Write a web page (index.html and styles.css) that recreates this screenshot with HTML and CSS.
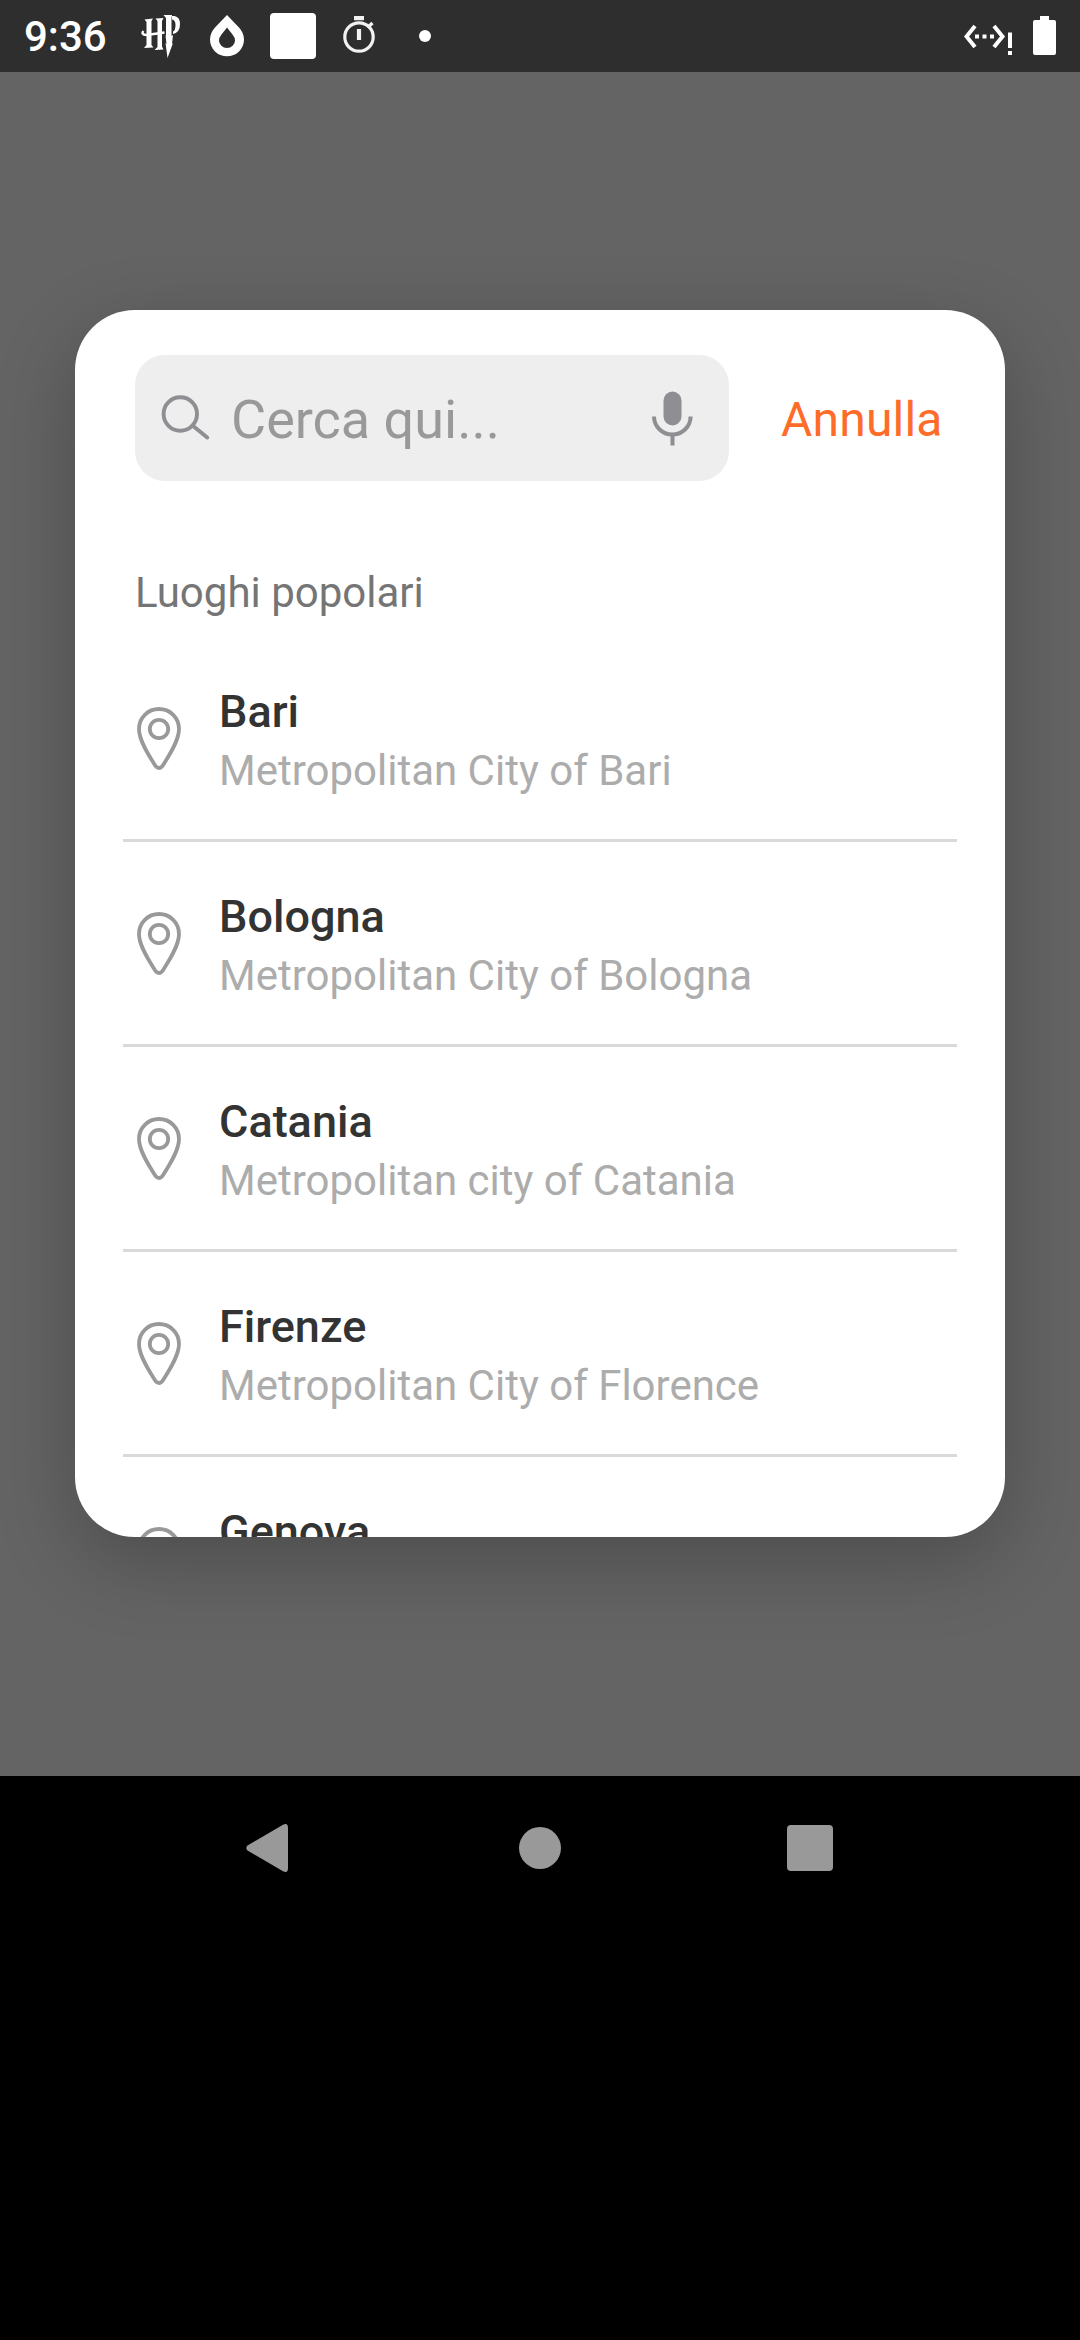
FILE: index.html
```html
<!DOCTYPE html>
<html lang="it">
<head>
<meta charset="utf-8">
<title>Luoghi popolari</title>
<link rel="stylesheet" href="styles.css">
</head>
<body>
<svg width="0" height="0" class="defs">
  <symbol id="pin" viewBox="0 0 44 63">
    <path d="M22 2C10.800 2 2 10.800 2 22c0 12 10.500 27.500 16.400 36.800 1.800 2.900 5.400 2.900 7.200 0C31.500 49.500 42 34 42 22 42 10.800 33.200 2 22 2z" fill="none" stroke="#999" stroke-width="3.800"/>
    <circle cx="22" cy="22" r="9.200" fill="none" stroke="#999" stroke-width="3.800"/>
  </symbol>
</svg>
<header class="status">
  <div class="clock">9:36</div>
  <svg class="logo" width="40" height="46" viewBox="141 13 40 46" fill="#fff">
    <path d="M144.500 19.500l8.500-1-1.500 2.500v24l2 2.500-9.500.5 2.500-3V22zM155.500 18.500l8-.5-1.500 3V46.500l1.500 3-9 .5 3-3V21z"/>
    <path d="M163.500 15h8.500l-.5 3v18l1.500-1-1 9 1-1-5.500 15-2-15 1 1-1-9 .5 1V18z"/>
    <path d="M172 16h2.500q5.500 1 5.500 8 0 8.500-7 10v-2.500q2.500-1 2.500-6.500 0-5-3.500-5.500z"/>
    <path d="M143.500 31q-3 3.500 3 4l18-2.500" fill="none" stroke="#fff" stroke-width="2.300"/>
  </svg>
  <svg class="drop" width="34" height="42" viewBox="0 0 34 42"><path fill="#fff" fill-rule="evenodd" d="M17 0L29 12.500Q34 18 34 24.500A17 16.800 0 0 1 0 24.500Q0 18 5 12.500zM17 12.500L11.500 19.500Q9 22.500 9 25.500A8 7.500 0 0 0 25 25.500Q25 22.500 22.500 19.500z"/></svg>
  <div class="tile"></div>
  <svg class="timer" width="32" height="38" viewBox="0 0 32 38" fill="none" stroke="#f2f2f2"><circle cx="16" cy="21" r="14.200" stroke-width="3.200"/><path d="M11 2.200h10M16 13v11" stroke-width="4.200"/><path d="M24.500 11.500l5-4.500" stroke-width="3.400"/></svg>
  <div class="dot"></div>
  <svg class="net" width="49" height="32" viewBox="0 0 49 32"><path d="M11 2L2.500 12.500 11 23M30 2l8.500 10.500L30 23" fill="none" stroke="#fff" stroke-width="4"/><path fill="#fff" d="M11 10.500h4v4h-4zM18.500 10.500h4v4h-4zM26 10.500h4v4h-4zM44 8.500h4V24h-4zM44 27h4v4h-4z"/></svg>
  <svg class="battery" width="23" height="39" viewBox="0 0 23 39"><path fill="#fff" d="M7 0h9v4h5a2 2 0 0 1 2 2v31a2 2 0 0 1-2 2H2a2 2 0 0 1-2-2V6a2 2 0 0 1 2-2h5z"/></svg>
</header>
<main class="scrim">
  <section class="dialog">
    <div class="top">
      <div class="search">
        <svg class="glass" width="50" height="46" viewBox="0 0 50 46" fill="none" stroke="#8e8e93" stroke-width="3.900"><circle cx="20.300" cy="20" r="16.700"/><path d="M32.500 31.500l14.700 12" stroke-linecap="round"/></svg>
        <span class="hint">Cerca qui...</span>
        <svg class="mic" width="41" height="55" viewBox="0 0 41 55"><rect x="11.500" y="0.500" width="18" height="34" rx="9" fill="#8e8e93"/><path d="M2 25.500a18.300 18 0 0 0 36.600 0M20.500 43.500V54.500" fill="none" stroke="#8e8e93" stroke-width="4"/></svg>
      </div>
      <span class="cancel">Annulla</span>
    </div>
    <h2 class="heading">Luoghi popolari</h2>
    <ul class="list">
      <li class="row"><svg class="pin"><use href="#pin"/></svg><div><div class="name">Bari</div><div class="sub">Metropolitan City of Bari</div></div></li>
      <li class="row"><svg class="pin"><use href="#pin"/></svg><div><div class="name">Bologna</div><div class="sub">Metropolitan City of Bologna</div></div></li>
      <li class="row"><svg class="pin"><use href="#pin"/></svg><div><div class="name">Catania</div><div class="sub">Metropolitan city of Catania</div></div></li>
      <li class="row"><svg class="pin"><use href="#pin"/></svg><div><div class="name">Firenze</div><div class="sub">Metropolitan City of Florence</div></div></li>
      <li class="row"><svg class="pin"><use href="#pin"/></svg><div><div class="name">Genova</div></div></li>
    </ul>
  </section>
</main>
<nav class="nav">
  <svg width="42" height="48" viewBox="0 0 42 48"><path fill="#999" d="M1.500 21.500L37 .8Q42-1.500 42 4v40q0 5.500-5 3.200L1.500 26.500Q-1 24 1.500 21.500z"/></svg>
  <div class="home"></div>
  <div class="recent"></div>
</nav>
</body>
</html>
```
FILE: styles.css
```css
* { box-sizing: border-box; }
body {
  margin: 0;
  width: 1080px;
  height: 2340px;
  overflow: hidden;
  background: #000;
  font-family: Roboto, sans-serif;
}
.defs { display: none; }
svg { display: block; flex: none; }
.status {
  display: flex;
  align-items: flex-start;
  height: 72px;
  background: #2e2e2e;
  color: #fff;
}
.clock {
  width: 141px;
  padding-left: 24px;
  margin-top: 12px;
  font-size: 42px;
  font-weight: 500;
  line-height: 50px;
  white-space: nowrap;
}
.logo { margin: 13px 29px 0 0; }
.drop { margin-top: 15px; }
.tile {
  width: 46px;
  height: 46px;
  margin: 13px 27px 0 26px;
  border-radius: 4px;
  background: #fff;
}
.timer { margin-top: 16px; }
.dot {
  width: 12px;
  height: 12px;
  margin: 30px 0 0 44px;
  border-radius: 50%;
  background: #fff;
}
.net { margin: 24px 20px 0 auto; }
.battery { margin: 16px 24px 0 0; }
.scrim {
  height: 1704px;
  padding: 238px 75px 0;
  background: #646464;
}
.dialog {
  height: 1227px;
  padding: 45px 48px 0;
  overflow: hidden;
  border-radius: 60px;
  background: #fff;
  box-shadow: 0 24px 80px rgba(0, 0, 0, .24);
}
.top {
  display: flex;
  padding-left: 12px;
}
.search {
  display: flex;
  align-items: flex-start;
  width: 594px;
  height: 126px;
  border-radius: 30px;
  background: #eee;
}
.glass { margin: 39px 0 0 25px; }
.hint {
  flex: 1;
  margin: 33px 0 0 21px;
  font-size: 54px;
  line-height: 64px;
  color: #999;
}
.mic { margin: 36px 36px 0 0; }
.cancel {
  margin: 37px 0 0 52px;
  font-size: 48px;
  line-height: 56px;
  letter-spacing: .2px;
  color: #ff6c2a;
}
.heading {
  margin: 87px 0 19px;
  padding-left: 12px;
  font-size: 42px;
  font-weight: 400;
  line-height: 50px;
  color: #757575;
}
.list {
  margin: 0;
  padding: 0;
  list-style: none;
}
.row {
  display: flex;
  gap: 38px;
  height: 205px;
  padding: 48px 0 0 14px;
  border-bottom: 3px solid #d9d9d9;
}
.pin {
  width: 44px;
  height: 63px;
  margin-top: 22px;
}
.name {
  font-size: 45px;
  font-weight: 500;
  line-height: 54px;
  color: #333;
}
.sub {
  margin-top: 7px;
  font-size: 42px;
  line-height: 50px;
  color: #acacac;
}
.nav {
  display: flex;
  align-items: center;
  height: 144px;
  padding-left: 246px;
}
.home {
  width: 42px;
  height: 42px;
  margin: 0 226px 0 231px;
  border-radius: 50%;
  background: #999;
}
.recent {
  width: 46px;
  height: 46px;
  border-radius: 4px;
  background: #999;
}
```
